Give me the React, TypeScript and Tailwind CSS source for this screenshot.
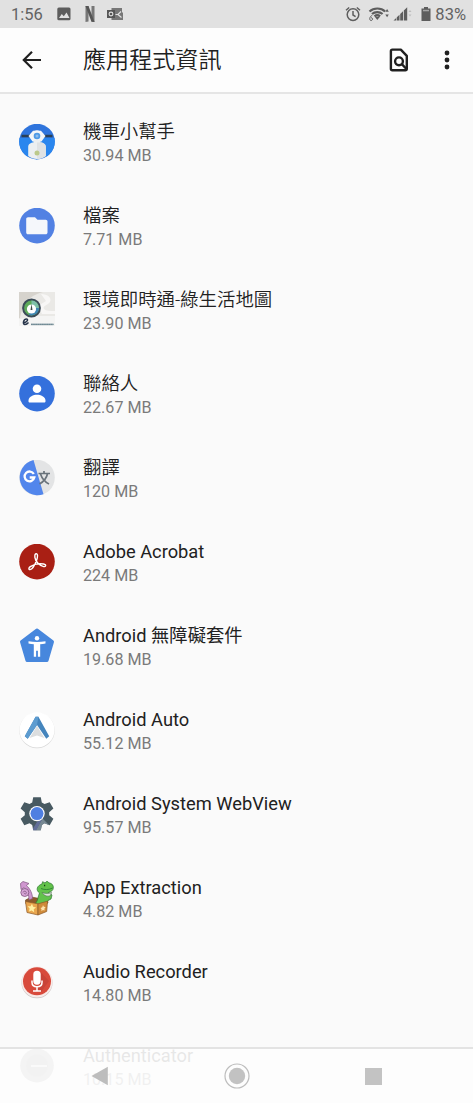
import React from "react";
import clsx from "clsx";

interface IAppItem {
  name: string;
  size: string;
  icon: React.ReactNode;
}

const ScooterIcon = () => (
  <svg viewBox="0 0 36 36" className="size-9">
    <circle cx="18" cy="17.6" r="17.8" fill="#2f74dc" />
    <path d="M.5 14h35a18 18 0 0 1-7 18L18 35.4 7.500 32a18 18 0 0 1-7-18z" fill="#2a86ee" />
    <path d="M2.500 12h9M24.500 12h9" stroke="#2b4055" strokeWidth="2.400" />
    <path d="M9.500 12 14 6.800h8l4.500 5.200-4 5.500h-9z" fill="#f4f6f8" />
    <circle cx="18" cy="12" r="5.800" fill="#f4f6f8" />
    <circle cx="18" cy="12" r="3.300" fill="#4f9ae6" />
    <circle cx="18" cy="12" r="1.500" fill="#8fbdea" />
    <path d="M9.200 32V23c0-3 2.500-4.500 5.300-4.500V16h7v2.500c2.800 0 5.300 1.500 5.300 4.500v9c-5 4-12.600 4-17.600 0z" fill="#eceff1" />
    <path d="M18 18.500h3.500c2.800 0 5.300 1.500 5.300 4.500v9a18 18 0 0 1-8.800 3.400z" fill="#dfe2e4" />
    <circle cx="18" cy="29" r="2.500" fill="#bcc98a" />
  </svg>
);

const FilesIcon = () => (
  <svg viewBox="0 0 36 36" className="size-9">
    <circle cx="18" cy="17.600" r="17.800" fill="#5281e3" />
    <path d="M9 9.200h7l2.500 2.500h8.200c1 0 1.800.8 1.800 1.800v11c0 1-.8 1.800-1.800 1.800H9c-1 0-1.800-.8-1.800-1.800V11c0-1 .8-1.800 1.800-1.800z" fill="#f5f7fb" />
  </svg>
);

const EnvironmentIcon = () => (
  <svg viewBox="0 0 36 36" className="size-9">
    <path d="M0 0h36v34H0z" fill="#eae9e6" />
    <path d="M0 0h24C9 4 4 12 1 26H0z" fill="#d6d3cd" />
    <path d="M22 2c7 0 11 4 9 8-2 3-8 4-6 7 2 2 6 2 11 2v3H23l-4-8 8-5z" fill="#f8f7f6" />
    <path d="M0 27 18 24h18v10H0z" fill="#f4f4f3" />
    <circle cx="12.500" cy="16" r="8.400" fill="#5faa5a" stroke="#3c4b58" strokeWidth="2" />
    <path d="M12.500 8.500a7.500 7.500 0 0 1 7.500 7.500h-7.500z" fill="#7fc0a8" />
    <path d="M12.500 16H20a7.500 7.500 0 0 1-10 7z" fill="#3f86b3" />
    <circle cx="12.500" cy="17" r="4.600" fill="#fff" />
    <path d="m12.500 12-1 6h2z" fill="#3d4a46" />
    <path d="M4 31c5-1 5.500-4 3.500-4-3 0-4.500 5.500-1.500 5.500 1.500 0 2.500-.8 3.500-2" fill="none" stroke="#263449" strokeWidth="1.400" />
    <path d="M12 32.400h22.500" stroke="#8ea4ab" strokeWidth="1.600" />
    <path d="M12 32.400h22.500" stroke="#6d8791" strokeWidth="1" strokeDasharray="1.600 .6" />
  </svg>
);

const ContactsIcon = () => (
  <svg viewBox="0 0 36 36" className="size-9">
    <circle cx="18" cy="17.600" r="17.800" fill="#3470dc" />
    <circle cx="18" cy="12.700" r="4.300" fill="#fff" />
    <path d="M9.500 24.500c0-4 5-5.800 8.500-5.800s8.500 1.800 8.500 5.800v.8c0 .8-.5 1.300-1.300 1.300H10.800c-.8 0-1.300-.5-1.300-1.300z" fill="#fff" />
  </svg>
);

const TranslateIcon = () => (
  <svg viewBox="0 0 36 36" className="size-9">
    <circle cx="18" cy="17.600" r="17.800" fill="#e3e4e5" />
    <path d="M14.500.1A17.800 17.800 0 1 0 24.500 34.200z" fill="#5286ec" />
    <path d="M14.800 14a4.900 4.900 0 1 0 .5 3.500h-4.600" fill="none" stroke="#fff" strokeWidth="2.300" />
    <path d="M19.500 13.500h11.500M25 11v2.500M28.500 13.700c-1 4.500-4 8-8 10.200M21.500 14c1.500 4.500 4.500 8 8.500 10" fill="none" stroke="#69737b" strokeWidth="1.700" />
  </svg>
);

const AcrobatIcon = () => (
  <svg viewBox="0 0 36 36" className="size-9">
    <circle cx="18" cy="17.600" r="17.800" fill="#a91f14" />
    <path
      d="M17 9.700c2.200-.2 1.600 3.800.7 6.300-1.500 4.200-4.300 9.300-6.700 9.600-1.700.1-1.300-1.900.3-3 3.500-2.200 9.200-3.400 13.300-2.600 3.500.8 2 3.300-.5 2.400-3.800-1-7.700-4.800-8.200-9-.2-1.900 0-3.500 1.100-3.700z"
      fill="none"
      stroke="#fff"
      strokeWidth="1.400"
    />
  </svg>
);

const AccessibilityIcon = () => (
  <svg viewBox="0 0 36 36" className="size-9">
    <path d="M18 2 33.500 13.800 28 32.500H8L2.500 13.800z" fill="#4787dd" stroke="#4787dd" strokeWidth="3" strokeLinejoin="round" />
    <circle cx="18" cy="10.300" r="2.200" fill="#fff" />
    <path d="M9.500 13.200c5.500 1.100 11.500 1.100 17 0v2.200c-1.800.4-3.600.7-5.300.9v12.500h-2.300v-6h-1.800v6h-2.300V16.300c-1.700-.2-3.500-.5-5.300-.9z" fill="#fff" />
  </svg>
);

const AutoIcon = () => (
  <svg viewBox="0 0 36 36" className="size-9 overflow-visible">
    <circle cx="18" cy="18.600" r="17.700" fill="#d6d6d6" />
    <circle cx="18" cy="17.900" r="17.600" fill="#fff" />
    <path d="m18 14-7.500 12 7.500-2.500 7.500 2.500z" fill="#dcdedf" />
    <path d="M16.600 4.800h2.800l10.800 19.400-2.900 2.500L18 13 8.700 26.700l-2.900-2.500z" fill="#4585bd" />
    <path d="M16.600 4.800h2.800L18 13 8.700 26.700l-2.900-2.500z" fill="#5d9cd0" />
  </svg>
);

const WebViewIcon = () => (
  <svg viewBox="0 0 36 36" className="size-9">
    <path
      d="M14.200 1.200h7.600l1 5.300 2.700 1.600 5.200-1.900 3.700 6.400-4.200 3.600v3l4.200 3.600-3.700 6.400-5.200-1.900-2.700 1.600-1 5.300h-7.600l-1-5.300-2.700-1.600-5.200 1.900-3.700-6.400 4.200-3.600v-3l-4.200-3.600 3.700-6.400 5.200 1.900 2.700-1.600z"
      fill="#485a62"
    />
    <path d="m23.500 22.500 6.800 6.800-4.800-2-2.700 1.600-1 5.300h-5z" fill="#778994" />
    <path d="m18 26 5.500-3.500-6.300 11.700h-3l-.3-1.500z" fill="#626e99" />
    <circle cx="18" cy="17.600" r="7.700" fill="#fff" />
    <circle cx="18" cy="17.600" r="6.500" fill="#4f7fe1" />
  </svg>
);

const ExtractionIcon = () => (
  <svg viewBox="0 0 36 36" className="size-9">
    <path d="m6.500 20 6-3 16 3 .5 3-10 4-12-3z" fill="#8c5a2b" stroke="#6d431d" strokeWidth=".6" />
    <path d="m4 1.500 6 2-2.600 2c3.600 3 6.100 8 6.100 13l-3.500 1.500c0-5-1.500-10-4.800-12.500L2 9.500l-.5-6z" fill="#cf96cf" stroke="#80537f" strokeWidth=".7" />
    <circle cx="5.800" cy="12.500" r="4" fill="#d6a4d6" stroke="#80537f" strokeWidth=".8" />
    <path d="M4 12.500c1-2.500 4-1 3.200.8-.7 1.200-2 .7-1.700-.3" fill="none" stroke="#80537f" strokeWidth=".8" />
    <path
      d="M16.500 23.500c2.500-3 2.500-7 4-10.500-1.800-1.300-2.700-3-2.200-5C19 6 21 4.500 23 4l.6-2.300L26 2.900l2-1.700 2 1.600c3 .5 4.700 2.700 4.300 5.200-.3 2.500-1.800 3.500-4.800 4.500L33 15l-1 4-3 1.500-3 4.500-7 1z"
      fill="#62c24b"
      stroke="#2c7430"
      strokeWidth=".7"
    />
    <path d="M22 8.500c3.500 1.500 8 1.500 11.500-.5" fill="none" stroke="#2d8033" strokeWidth=".9" />
    <path d="M23 12.500c3 1.200 6.500 1.200 9.500 0l-1 3c-2.500 1.300-6 .8-8.500-3z" fill="#dfe6dc" stroke="#4c6a4b" strokeWidth=".6" />
    <path d="M25 5.500h1.200" stroke="#163817" strokeWidth="1.300" />
    <path d="m6.500 21.500 12.500 2.300V35L8 32.500z" fill="#e9a64e" stroke="#8b5928" strokeWidth=".7" />
    <path d="m19 23.800 9.500-2.600-.8 10.300L19 35z" fill="#cf8a3a" stroke="#8b5928" strokeWidth=".7" />
    <path d="m13 23.800 1.100 2.900 3 .8-2.400 1.800.5 3-2.600-1.800-2.600 1.100.6-3-2-2.300 3-.1z" fill="#fff0a3" />
    <path d="m24 25 .8 1.800 1.800.2-1.200 1.700.2 1.900-1.700-.6-1.500 1.200.1-2-1-1.300 1.800-.7z" fill="#ffe5b0" />
  </svg>
);

const RecorderIcon = () => (
  <svg viewBox="0 0 36 36" className="size-9 overflow-visible">
    <circle cx="18" cy="18.800" r="15.500" fill="#c8c3c2" />
    <circle cx="18" cy="18" r="15.500" fill="#f8e9e7" />
    <circle cx="18" cy="17.300" r="14" fill="#d84a3c" />
    <path d="m21.500 8 8.500 9-8 11-5-1 5-10z" fill="#c94338" />
    <rect x="14.300" y="6.800" width="7.400" height="14" rx="3.700" fill="#fff" />
    <path d="M13 16.500v2c0 2.600 2.200 4.200 5 4.200s5-1.600 5-4.200v-2M18 22.700V27m-4 0h8" fill="none" stroke="#fff" strokeWidth="1.500" />
  </svg>
);

const AuthenticatorIcon = () => (
  <svg viewBox="0 0 36 36" className="size-9">
    <circle cx="18" cy="17.600" r="16.800" fill="#a0a0a0" />
    <circle cx="18" cy="17.600" r="11" fill="#929292" />
    <path d="M12 18h16" stroke="#dedede" strokeWidth="2" />
  </svg>
);

const apps: IAppItem[] = [
  { name: "機車小幫手", size: "30.94 MB", icon: <ScooterIcon /> },
  { name: "檔案", size: "7.71 MB", icon: <FilesIcon /> },
  { name: "環境即時通-綠生活地圖", size: "23.90 MB", icon: <EnvironmentIcon /> },
  { name: "聯絡人", size: "22.67 MB", icon: <ContactsIcon /> },
  { name: "翻譯", size: "120 MB", icon: <TranslateIcon /> },
  { name: "Adobe Acrobat", size: "224 MB", icon: <AcrobatIcon /> },
  { name: "Android 無障礙套件", size: "19.68 MB", icon: <AccessibilityIcon /> },
  { name: "Android Auto", size: "55.12 MB", icon: <AutoIcon /> },
  { name: "Android System WebView", size: "95.57 MB", icon: <WebViewIcon /> },
  { name: "App Extraction", size: "4.82 MB", icon: <ExtractionIcon /> },
  { name: "Audio Recorder", size: "14.80 MB", icon: <RecorderIcon /> },
  { name: "Authenticator", size: "10.15 MB", icon: <AuthenticatorIcon /> },
];

const StatusBar = () => (
  <div className="flex h-7 shrink-0 items-center bg-[#e1e1e1] pl-[11px] pr-[7px] text-[#636363]">
    <span className="w-[32px] whitespace-nowrap pt-[2px] text-[16.5px] leading-7">1:56</span>
    <svg viewBox="0 0 14 14" className="ml-[14px] size-[14px]">
      <rect x=".3" y=".5" width="13.200" height="12.800" rx="1.500" fill="#5d5d5d" />
      <path d="m2 11 2.800-4 2 2.200L9.500 5.500l3 5.500z" fill="#e1e1e1" />
    </svg>
    <svg viewBox="0 0 10 16" className="ml-[14px] h-4 w-[10px]">
      <path d="M.5 0h3v15.500l-3 .5zM6.500 0h3v16l-3-.5z" fill="#777" />
      <path d="M.5 0h3l6 16-3-.3z" fill="#555" />
    </svg>
    <svg viewBox="0 0 17 14" className="ml-[12px] h-[14px] w-[17px]">
      <path d="M4.500 1H15v4l1 1v7H4.500z" fill="#777" />
      <path d="M0 3h8v8H0z" fill="#555" />
      <circle cx="4" cy="7" r="1.900" fill="none" stroke="#e1e1e1" strokeWidth="1.100" />
      <path d="M8.500 7.500h2.500l3-3M11 7.500l3.500 3" fill="none" stroke="#e1e1e1" strokeWidth="1.200" />
    </svg>
    <svg viewBox="0 0 16 16" className="ml-auto size-4" fill="none" stroke="#5e5e5e" strokeWidth="1.500">
      <circle cx="8" cy="8.600" r="5.800" />
      <path d="M8 5v4l2.600 1.600M1 4.200l3.200-2.700M15 4.200l-3.200-2.700" />
    </svg>
    <svg viewBox="0 0 22 16" className="ml-[7px] h-4 w-[22px]">
      <path d="M1.500 5.500c4.300-4 11.500-4 15.600 0M4 8c2.800-2.600 7.700-2.600 10.600 0M6.500 10.400c1.700-1.400 3.900-1.400 5.600 0" fill="none" stroke="#5d5d5d" strokeWidth="2.200" />
      <path d="m7 11 2.300 3 2.400-3zM17.300 5.800 19.100 3l1.700 2.800zM17.300 8.500l1.800 2.800 1.700-2.800z" fill="#5d5d5d" />
      <path d="M4.200 9.500C1.500 10 1 14.500 3 14.500s2.300-3 0-2.700" fill="none" stroke="#5d5d5d" strokeWidth="1" />
    </svg>
    <svg viewBox="0 0 19 14" className="ml-[3px] h-[14px] w-[19px]" fill="#5d5d5d">
      <path d="M.5 13.500 3.200 11v2.500zM3.800 10.300l2.700-2.600v5.800H3.800zM7.200 7l2.800-2.700v9.200H7.200zM10.800 3.500l3.400-3.200v13.200h-3.400z" />
      <path d="m15.500 5 1.500-2 1.500 2zM15.500 7.500l1.500 2 1.500-2z" fill="#bdbdbd" />
    </svg>
    <svg viewBox="0 0 10 16" className="ml-[9px] h-4 w-[10px]" fill="#5d5d5d">
      <path d="M3 1h4v1.500h2.500V15H.5V2.500H3z" />
      <path d="M2 3.800h6v1.500H2z" fill="#a5a5a5" />
    </svg>
    <span className="ml-[4px] whitespace-nowrap pt-[2px] text-[16.5px] leading-7">83%</span>
  </div>
);

const Header = () => (
  <header className="flex h-[66px] shrink-0 items-center border-b-2 border-[#e5e5e5] bg-[#fdfdfd] text-[#202020]">
    <svg viewBox="0 0 20 20" className="ml-[22px] size-5" fill="none" stroke="currentColor" strokeWidth="2.200">
      <path d="M19 10H2.500M10 1.800 1.800 10l8.200 8.200" />
    </svg>
    <h1 className="ml-[41px] pt-[2px] text-[23.1px] font-[350] leading-8">應用程式資訊</h1>
    <svg viewBox="0 0 20 24" className="ml-auto h-6 w-5" fill="none" stroke="currentColor" strokeWidth="2.400">
      <path d="M3.400 1.600h8.400l6 6.200v12.900c0 .9-.6 1.500-1.500 1.500H3.400c-.9 0-1.500-.6-1.500-1.500V3.100c0-.9.600-1.500 1.500-1.500z" strokeLinejoin="round" />
      <circle cx="10" cy="13.300" r="3.900" />
      <path d="m12.800 16.200 4.700 4.800" />
    </svg>
    <svg viewBox="0 0 6 20" className="ml-[35px] mr-[23px] h-5 w-[6px]" fill="currentColor">
      <circle cx="3" cy="3" r="2.400" />
      <circle cx="3" cy="10" r="2.400" />
      <circle cx="3" cy="17" r="2.400" />
    </svg>
  </header>
);

const AppRow = ({ item }: { item: IAppItem }) => {
  // latin names keep the regular weight, chinese ones are a bit lighter
  const isLatin = /^[A-Z]/.test(item.name);

  return (
    <li className="flex h-[84px] shrink-0 items-center pl-[19px]">
      {item.icon}
      <div className="ml-7 pt-1">
        <p className={clsx("leading-6 text-[#212121]", isLatin ? "text-[18.3px]" : "text-[18.4px] font-[350]")}>
          {item.name}
        </p>
        <p className="text-[16.1px] leading-6 text-[#7a7a7a]">{item.size}</p>
      </div>
    </li>
  );
};

const NavigationBar = () => (
  <nav className="absolute inset-x-0 bottom-0 flex h-14 items-center border-t-2 border-[#e3e3e3] bg-[#fdfdfd]/90">
    <svg viewBox="0 0 18 20" className="ml-[91px] h-5 w-[18px]">
      <path d="M.5 10 16.800.8v18.400z" fill="#bdbdbd" />
    </svg>
    <svg viewBox="0 0 26 26" className="ml-[115px] size-[26px]">
      <circle cx="13" cy="13" r="12" fill="#fdfdfd" stroke="#bdbdbd" strokeWidth="1.200" />
      <circle cx="13" cy="13" r="8.200" fill="#c2c2c2" />
    </svg>
    <div className="ml-[115px] size-[17px] bg-[#c3c3c3]" />
  </nav>
);

const App = () => {
  return (
    <div className="relative flex h-[1103px] w-[473px] flex-col overflow-hidden bg-[#fafafa] font-['Roboto','Noto_Sans_CJK_TC',sans-serif]">
      <StatusBar />
      <Header />
      <ul className="flex flex-col pt-[6px]">
        {apps.map((item) => (
          <AppRow key={item.name} item={item} />
        ))}
      </ul>
      <NavigationBar />
    </div>
  );
};

export default App;
